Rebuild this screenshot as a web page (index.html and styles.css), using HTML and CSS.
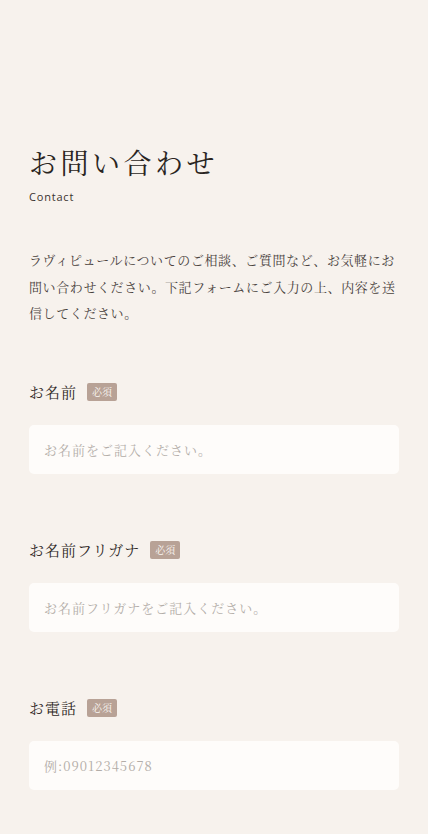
FILE: index.html
```html
<!DOCTYPE html>
<html lang="ja">
<head>
<meta charset="utf-8">
<meta name="viewport" content="width=device-width, initial-scale=1">
<title>お問い合わせ</title>
<link rel="stylesheet" href="styles.css">
</head>
<body>
<main class="page">
  <header class="head">
    <h1 class="title">お問い合わせ</h1>
    <p class="sub">Contact</p>
  </header>
  <p class="lead">ラヴィピュールについてのご相談、ご質問など、お気軽にお問い合わせください。下記フォームにご入力の上、内容を送信してください。</p>
  <form class="form">
    <div class="field">
      <div class="label-row"><span class="label">お名前</span><span class="req">必須</span></div>
      <input class="input" type="text" placeholder="お名前をご記入ください。">
    </div>
    <div class="field">
      <div class="label-row"><span class="label">お名前フリガナ</span><span class="req">必須</span></div>
      <input class="input" type="text" placeholder="お名前フリガナをご記入ください。">
    </div>
    <div class="field">
      <div class="label-row"><span class="label">お電話</span><span class="req">必須</span></div>
      <input class="input" type="tel" placeholder="例:09012345678">
    </div>
  </form>
</main>
</body>
</html>
```
FILE: styles.css
```css
html, body {
  margin: 0;
  padding: 0;
  background: #f7f2ed;
}
body {
  font-family: "Noto Serif CJK JP", "Noto Sans CJK JP", serif;
  color: #2b2623;
}
.page {
  padding: 142px 29px 0 29px;
}
.head {
  display: flex;
  flex-direction: column;
}
.title {
  margin: 0;
  font-size: 28px;
  line-height: 40px;
  font-weight: 400;
  letter-spacing: 3.5px;
  color: #2a2522;
}
.sub {
  margin: 7px 0 0;
  font-family: "Open Sans", "Noto Sans", sans-serif;
  font-size: 11px;
  line-height: 16px;
  letter-spacing: 0.8px;
  color: #3a332e;
}
.lead {
  margin: 42px 0 0;
  font-size: 13px;
  line-height: 26.5px;
  letter-spacing: 0.6px;
  color: #4a423d;
}
.form {
  margin-top: 53px;
  display: flex;
  flex-direction: column;
  gap: 64px;
}
.field {
  display: flex;
  flex-direction: column;
  gap: 21px;
}
.label-row {
  display: flex;
  align-items: center;
  height: 24px;
  gap: 10px;
}
.label {
  font-size: 15px;
  line-height: 24px;
  letter-spacing: 1px;
  color: #2e2825;
}
.req {
  display: inline-flex;
  align-items: center;
  justify-content: center;
  height: 18px;
  padding: 0 5px;
  border-radius: 2px;
  background: #b8a296;
  color: #fbf7f3;
  font-size: 10px;
  line-height: 18px;
}
.input {
  box-sizing: border-box;
  width: 100%;
  height: 49px;
  margin: 0;
  padding: 0 15px;
  border: none;
  border-radius: 5px;
  background: #fefcfa;
  font-family: inherit;
  font-size: 13px;
  letter-spacing: 1px;
  color: #333;
  outline: none;
}
.input::placeholder {
  color: #b3ada8;
}
```
